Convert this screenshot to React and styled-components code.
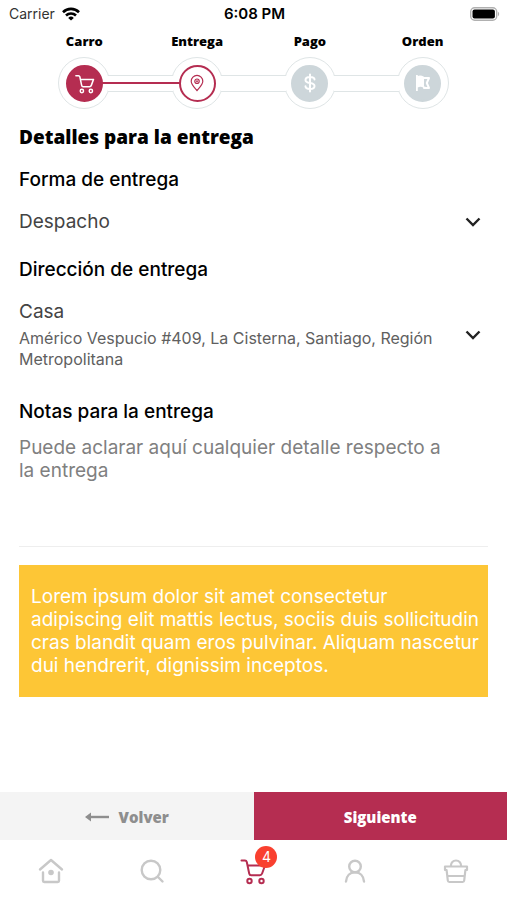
import React, { useState } from "react";
import styled, { createGlobalStyle } from "styled-components";

const steps = [
  { name: "Carro", status: "done", icon: <CartIcon size={21} /> },
  { name: "Entrega", status: "active", icon: <PinIcon /> },
  { name: "Pago", status: "pending", icon: <DollarIcon /> },
  { name: "Orden", status: "pending", icon: <FlagIcon /> },
];

export default function App() {
  const [forma, setForma] = useState("Despacho");
  const [direccion, setDireccion] = useState("Casa");
  const [notas, setNotas] = useState("");

  return (
    <Screen>
      <GlobalStyle />

      <StatusBar>
        <Carrier>
          Carrier <WifiIcon />
        </Carrier>
        <Clock>6:08 PM</Clock>
        <BatteryIcon />
      </StatusBar>

      <Stepper>
        <StepNames>
          {steps.map((s) => (
            <li key={s.name}>{s.name}</li>
          ))}
        </StepNames>
        <Track>
          {steps.map((s, i) => (
            <React.Fragment key={s.name}>
              {i > 0 && (
                <Connector>{i === 1 && <Progress />}</Connector>
              )}
              <Ring>
                <Dot $status={s.status}>{s.icon}</Dot>
              </Ring>
            </React.Fragment>
          ))}
        </Track>
      </Stepper>

      <Content>
        <Title>Detalles para la entrega</Title>

        <Label htmlFor="forma">Forma de entrega</Label>
        <SelectRow>
          <Select
            id="forma"
            value={forma}
            onChange={(e) => setForma(e.target.value)}
          >
            <option>Despacho</option>
          </Select>
          <ChevronIcon />
        </SelectRow>

        <Label htmlFor="direccion">Dirección de entrega</Label>
        <AddressRow>
          <Address>
            <AddressName>{direccion}</AddressName>
            <AddressText>
              Américo Vespucio #409, La Cisterna, Santiago, Región
              Metropolitana
            </AddressText>
          </Address>
          <ChevronIcon />
          <CoverSelect
            id="direccion"
            value={direccion}
            onChange={(e) => setDireccion(e.target.value)}
          >
            <option>Casa</option>
          </CoverSelect>
        </AddressRow>

        <Label htmlFor="notas">Notas para la entrega</Label>
        <Notes
          id="notas"
          rows={4}
          placeholder="Puede aclarar aquí cualquier detalle respecto a la entrega"
          value={notas}
          onChange={(e) => setNotas(e.target.value)}
        />

        <Notice>
          Lorem ipsum dolor sit amet consectetur
          <br />
          adipiscing elit mattis lectus, sociis duis sollicitudin cras blandit
          quam eros pulvinar. Aliquam nascetur dui hendrerit, dignissim
          inceptos.
        </Notice>
      </Content>

      <Actions>
        <ActionButton type="button">
          <ArrowIcon />
          Volver
        </ActionButton>
        <ActionButton type="button" $primary>
          Siguiente
        </ActionButton>
      </Actions>

      <TabBar>
        <Tab href="#inicio" aria-label="Inicio">
          <HomeIcon />
        </Tab>
        <Tab href="#buscar" aria-label="Buscar">
          <SearchIcon />
        </Tab>
        <Tab href="#carro" aria-label="Carro" $active>
          <CartHolder>
            <CartIcon size={28} />
            <Badge>4</Badge>
          </CartHolder>
        </Tab>
        <Tab href="#perfil" aria-label="Perfil">
          <UserIcon />
        </Tab>
        <Tab href="#compras" aria-label="Compras">
          <BasketIcon />
        </Tab>
      </TabBar>
    </Screen>
  );
}

function CartIcon({ size }) {
  return (
    <svg width={size} height={size} viewBox="0 0 28 28" fill="none" stroke="currentColor" strokeWidth="2" strokeLinecap="round" strokeLinejoin="round">
      <path d="M2.500 3.500H6c1 0 1.500.5 1.800 1.500l2.400 11.500c.2 1.200.8 1.700 2 1.700h8.600c1.200 0 1.900-.6 2.300-1.700L26 8.500H8.600" />
      <circle cx="10.500" cy="24" r="2.200" />
      <circle cx="22.500" cy="24" r="2.200" />
    </svg>
  );
}

function PinIcon() {
  return (
    <svg width="14" height="18" viewBox="0 0 14 18" fill="none" stroke="currentColor" strokeWidth="1.200">
      <path d="M7 16.500C4 13 1.200 10.500 1.200 7.200a5.800 5.800 0 0 1 11.600 0c0 3.300-2.800 5.800-5.800 9.300z" />
      <circle cx="7" cy="7.200" r="2.200" />
      <circle cx="7" cy="7.200" r=".4" />
    </svg>
  );
}

function DollarIcon() {
  return (
    <svg width="14" height="20" viewBox="0 0 14 20" fill="none" stroke="currentColor" strokeWidth="2" strokeLinecap="round">
      <path d="M7 1.500v17M11.500 6.500C11.500 4.700 9.500 4 7 4S2.500 5 2.500 7s1.800 2.600 4.500 3 4.500 1 4.500 3-2 3-4.500 3-4.500-.9-4.500-2.700" />
    </svg>
  );
}

function FlagIcon() {
  return (
    <svg width="16" height="18" viewBox="0 0 16 18">
      <path d="M1 1h1.800v16H1zM2.500 2.200C4.500 1 6.500 1.300 9 2.800v11.400c-2.300-1.700-4.500-1.700-6.500-.5z" fill="currentColor" />
      <path d="M9 4h5l-2.200 5 2.200 5H9l1.500-1" fill="none" stroke="currentColor" strokeWidth="2" strokeLinejoin="round" />
    </svg>
  );
}

function WifiIcon() {
  return (
    <svg width="18" height="14" viewBox="0 0 18 14" fill="none" stroke="currentColor" strokeWidth="2.600">
      <path d="M1 5.200a11.400 11.400 0 0 1 16 0M4 8.500a7.200 7.200 0 0 1 10 0" />
      <path d="M9 13.500L6.200 10.900a4 4 0 0 1 5.600 0z" fill="currentColor" stroke="none" />
    </svg>
  );
}

function BatteryIcon() {
  return (
    <svg width="30" height="14" viewBox="0 0 30 14">
      <rect x=".7" y=".7" width="26" height="12.600" rx="4" fill="none" stroke="#b0b0b0" strokeWidth="1.400" />
      <rect x="2.500" y="2.500" width="22.400" height="9" rx="2" fill="#000" />
      <path d="M28 4.800a2.600 2.600 0 0 1 0 4.400z" fill="#b0b0b0" />
    </svg>
  );
}

function ChevronIcon() {
  return (
    <svg width="16" height="10" viewBox="0 0 16 10" fill="none" stroke="#222" strokeWidth="2.400">
      <path d="M1.500 1.500L8 8l6.500-6.500" />
    </svg>
  );
}

function ArrowIcon() {
  return (
    <svg width="24" height="10" viewBox="0 0 24 10">
      <path d="M0 5l6-4.500v9z" fill="currentColor" />
      <path d="M5 5h19" stroke="currentColor" strokeWidth="2.400" />
    </svg>
  );
}

function HomeIcon() {
  return (
    <svg width="26" height="26" viewBox="0 0 26 26" fill="none" stroke="currentColor" strokeWidth="2.400" strokeLinecap="round" strokeLinejoin="round">
      <path d="M2 11.500L13 2l11 9.500M5 14.500v8.300c0 .8.400 1.200 1.200 1.200h13.600c.8 0 1.200-.4 1.200-1.200v-8.300" />
      <circle cx="13" cy="14.500" r="2.800" fill="currentColor" stroke="none" />
    </svg>
  );
}

function SearchIcon() {
  return (
    <svg width="26" height="26" viewBox="0 0 26 26" fill="none" stroke="currentColor" strokeWidth="2.400" strokeLinecap="round">
      <circle cx="12" cy="12" r="9.300" />
      <path d="M19 19l4.500 4.500" />
    </svg>
  );
}

function UserIcon() {
  return (
    <svg width="26" height="26" viewBox="0 0 26 26" fill="none" stroke="currentColor" strokeWidth="2.400" strokeLinecap="round">
      <circle cx="13" cy="8.500" r="5.800" />
      <path d="M4 23.500c.4-5.500 4-9.200 9-9.200s8.600 3.700 9 9.200" />
    </svg>
  );
}

function BasketIcon() {
  return (
    <svg width="26" height="26" viewBox="0 0 26 26" fill="none" stroke="currentColor" strokeWidth="2.200" strokeLinecap="round" strokeLinejoin="round">
      <path d="M2 8.500h22v3.500h-1.600l-1.200 10.500c-.1.900-.6 1.500-1.500 1.500H6.300c-.9 0-1.400-.6-1.500-1.500L3.600 12H2zM4.500 18h17M7.800 8c.3-3.300 2.200-5.500 5.200-5.500s4.900 2.200 5.200 5.500" />
    </svg>
  );
}

const GlobalStyle = createGlobalStyle`
  * {
    box-sizing: border-box;
  }
  body {
    margin: 0;
    background-color: #fff;
    font-family: Inter, "Liberation Sans", sans-serif;
    color: #000;
  }
`;

const Screen = styled.div`
  display: flex;
  flex-direction: column;
  min-height: 100vh;
`;

const StatusBar = styled.div`
  display: grid;
  grid-template-columns: 1fr auto 1fr;
  align-items: center;
  height: 27px;
  padding: 0 7px 0 9px;
  font-size: 14px;
  > svg {
    justify-self: end;
  }
`;

const Carrier = styled.span`
  display: flex;
  align-items: center;
  gap: 7px;
  color: #333;
  svg {
    color: #000;
  }
`;

const Clock = styled.span`
  font-size: 15px;
  font-weight: 600;
`;

const Stepper = styled.div`
  padding: 5px 28px 0;
`;

const StepNames = styled.ol`
  display: grid;
  grid-template-columns: repeat(4, 1fr);
  margin: 0;
  padding: 0;
  list-style: none;
  text-align: center;
  font-family: "Open Sans", sans-serif;
  font-size: 13px;
  font-weight: 800;
  line-height: 18px;
`;

/* rings sit in the middle of the four name columns */
const Track = styled.div`
  display: flex;
  align-items: center;
  margin-top: 7px;
  padding: 0 calc(12.5% - 26px);
`;

const Ring = styled.div`
  display: flex;
  align-items: center;
  justify-content: center;
  flex: none;
  width: 52px;
  height: 52px;
  border: 1px solid #dfe5e6;
  border-radius: 50%;
`;

const Connector = styled.div`
  display: flex;
  align-items: center;
  flex: 1;
  height: 17px;
  margin: 0 -2px;
  border: solid #dfe5e6;
  border-width: 1px 0;
  background-color: #fff;
  z-index: 1;
`;

const Progress = styled.div`
  flex: 1;
  height: 2px;
  margin: 0 -7px;
  background-color: #b52d51;
`;

const Dot = styled.div`
  display: flex;
  align-items: center;
  justify-content: center;
  width: 37px;
  height: 37px;
  border-radius: 50%;
  border: 2px solid ${(p) => (p.$status === "pending" ? "#cdd6da" : "#b52d51")};
  background-color: ${(p) =>
    ({ done: "#b52d51", active: "#fff", pending: "#cdd6da" })[p.$status]};
  color: ${(p) => (p.$status === "active" ? "#b52d51" : "#fff")};
`;

const Content = styled.main`
  display: flex;
  flex-direction: column;
  flex: 1;
  padding: 14px 19px 20px;
`;

const Title = styled.h1`
  margin: 0 0 17px;
  font-family: "Open Sans", sans-serif;
  font-size: 19px;
  font-weight: 800;
  line-height: 28px;
`;

const Label = styled.label`
  font-size: 19px;
  font-weight: 500;
  line-height: 24px;
`;

const SelectRow = styled.div`
  display: flex;
  align-items: center;
  height: 42px;
  margin: 9px 0 15px;
  padding-right: 7px;
`;

const Select = styled.select`
  flex: 1;
  appearance: none;
  padding: 0;
  border: none;
  background: none;
  font-family: inherit;
  font-size: 19px;
  line-height: 24px;
  color: #444;
`;

const AddressRow = styled.div`
  position: relative;
  display: flex;
  align-items: center;
  margin: 18px 0 30px;
  padding-right: 7px;
`;

const Address = styled.div`
  flex: 1;
  padding-right: 16px;
`;

const AddressName = styled.div`
  font-size: 19px;
  line-height: 24px;
  color: #444;
`;

const AddressText = styled.div`
  font-size: 16px;
  line-height: 21px;
  margin-top: 4px;
  color: #606060;
`;

/* the two line address is drawn above, this one only opens the list */
const CoverSelect = styled.select`
  position: absolute;
  inset: 0;
  width: 100%;
  opacity: 0;
`;

const Notes = styled.textarea`
  margin-top: 12px;
  padding: 0 40px 18px 0;
  border: none;
  border-bottom: 1px solid #eee;
  background: none;
  resize: none;
  font-family: inherit;
  font-size: 19px;
  line-height: 23px;
  color: #444;
  &::placeholder {
    color: #808080;
    opacity: 1;
  }
`;

const Notice = styled.p`
  margin: 18px 0 0;
  padding: 20px 2px 20px 12px;
  background-color: #fdc636;
  font-size: 19px;
  line-height: 23px;
  color: #fff;
`;

const Actions = styled.div`
  display: grid;
  grid-template-columns: 1fr 1fr;
`;

const ActionButton = styled.button`
  display: flex;
  align-items: center;
  justify-content: center;
  gap: 10px;
  height: 48px;
  padding-top: 2px;
  border: none;
  background-color: ${(p) => (p.$primary ? "#b52d51" : "#f4f4f4")};
  color: ${(p) => (p.$primary ? "#fff" : "#8e8e8e")};
  font-family: "Open Sans", sans-serif;
  font-size: 15px;
  font-weight: 800;
`;

const TabBar = styled.nav`
  display: grid;
  grid-template-columns: repeat(5, 1fr);
  height: 60px;
`;

const Tab = styled.a`
  display: flex;
  align-items: center;
  justify-content: center;
  padding-top: 2px;
  color: ${(p) => (p.$active ? "#b52d51" : "#c8c8c8")};
`;

const CartHolder = styled.span`
  position: relative;
  display: flex;
`;

const Badge = styled.span`
  position: absolute;
  top: -11px;
  right: -10px;
  width: 22px;
  height: 22px;
  border-radius: 50%;
  background-color: #f9402f;
  color: #fff;
  font-size: 14px;
  line-height: 22px;
  text-align: center;
`;
